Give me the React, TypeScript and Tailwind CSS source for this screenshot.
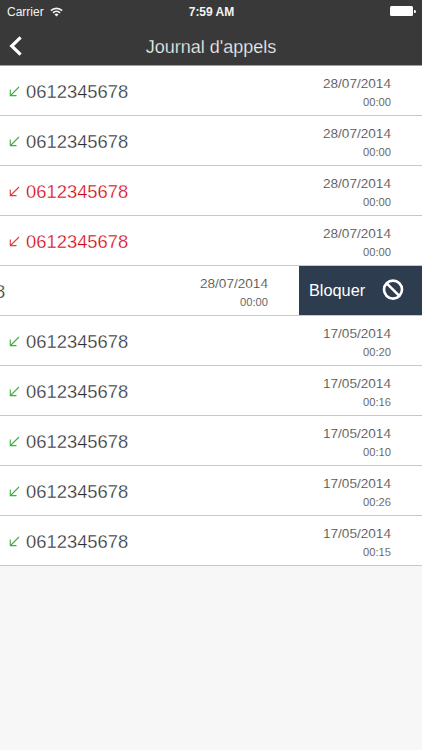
type Call = {
  number: string;
  date: string;
  time: string;
  missed?: boolean;
  swiped?: boolean;
};

const calls: Call[] = [
  { number: "0612345678", date: "28/07/2014", time: "00:00" },
  { number: "0612345678", date: "28/07/2014", time: "00:00" },
  { number: "0612345678", date: "28/07/2014", time: "00:00", missed: true },
  { number: "0612345678", date: "28/07/2014", time: "00:00", missed: true },
  { number: "0612345678", date: "28/07/2014", time: "00:00", swiped: true },
  { number: "0612345678", date: "17/05/2014", time: "00:20" },
  { number: "0612345678", date: "17/05/2014", time: "00:16" },
  { number: "0612345678", date: "17/05/2014", time: "00:10" },
  { number: "0612345678", date: "17/05/2014", time: "00:26" },
  { number: "0612345678", date: "17/05/2014", time: "00:15" },
];

function StatusBar() {
  return (
    <div className="grid h-[22px] grid-cols-3 items-center pr-[6px] pl-[7px] text-[12px] leading-none">
      <div className="flex items-center gap-[6px] pt-px">
        <span>Carrier</span>
        <svg width="13" height="10" viewBox="0 0 13 10" fill="none" stroke="currentColor" strokeWidth="1.7">
          <path d="M0.9 3.7a8 8 0 0 1 11.2 0" />
          <path d="M3 5.9a5 5 0 0 1 7 0" />
          <path d="M6.5 9.6 4.5 7.6a2.8 2.8 0 0 1 4 0z" fill="currentColor" stroke="none" />
        </svg>
      </div>
      <span className="pt-px text-center font-bold">7:59 AM</span>
      <div className="flex items-center justify-end gap-px">
        <span className="h-[10px] w-[23px] rounded-[1.5px] bg-white" />
        <span className="h-[3px] w-[1.5px] rounded-r-full bg-white" />
      </div>
    </div>
  );
}

function Header() {
  return (
    <header className="h-[66px] shrink-0 border-b border-[#a0a0a0] bg-[#393939] text-[#f4f4f4]">
      <StatusBar />
      <div className="grid h-[43px] grid-cols-[40px_1fr_40px] items-center pt-[6px]">
        <svg className="-mt-px ml-[9px]" width="13" height="20" viewBox="0 0 13 20" fill="none" stroke="#fff" strokeWidth="3.2">
          <path d="M11.6 1.3 2.7 10l8.9 8.7" />
        </svg>
        <h1 className="text-center text-[18px] leading-none [-webkit-text-stroke:0.25px_#393939]">Journal d'appels</h1>
      </div>
    </header>
  );
}

function CallRow({ call }: { call: Call }) {
  return (
    <li className="flex h-[49.98px] overflow-hidden border-b border-[#c8c8c8] bg-white">
      <div className={`flex w-[422px] shrink-0 items-center pr-[31px] pl-[9px] ${call.swiped ? "-ml-[123px]" : ""}`}>
        <svg
          className={`mt-[2px] ${call.missed ? "text-[#e0393b]" : "text-[#3cb03f]"}`}
          width="11"
          height="11"
          viewBox="0 0 11 11"
          fill="none"
          stroke="currentColor"
          strokeWidth="1.1"
        >
          <path d="M10 1 1.5 9.5M1.3 3.4v6.2h6.2" />
        </svg>
        <span
          className={`ml-[6px] pt-[3px] text-[18.4px] leading-none [-webkit-text-stroke:0.3px_#fff] ${
            call.missed ? "text-[#d4000a]" : "text-[#2c2c2c]"
          }`}
        >
          {call.number}
        </span>
        <div className="ml-auto flex flex-col items-end pt-[4px] text-[#3a3a3a] [-webkit-text-stroke:0.2px_#fff]">
          <span className="text-[13.6px] leading-[19px]">{call.date}</span>
          <span className="text-[11.2px] leading-[18px]">{call.time}</span>
        </div>
      </div>
      {call.swiped && (
        <button className="flex w-[124px] shrink-0 items-center bg-[#2d3c4f] pl-[10px] text-white">
          <span className="text-[16.3px] leading-none">Bloquer</span>
          <svg className="ml-[17px]" width="22" height="22" viewBox="0 0 22 22" fill="none" stroke="#fff" strokeWidth="2.6">
            <circle cx="11" cy="10.6" r="9" />
            <path d="m4.7 4.3 12.6 12.6" />
          </svg>
        </button>
      )}
    </li>
  );
}

export default function App() {
  return (
    <div className="flex h-[750px] w-[422px] flex-col overflow-hidden bg-[#f7f7f7] font-['Liberation_Sans',Arial,sans-serif] antialiased">
      <Header />
      <ul>
        {calls.map((call, i) => (
          <CallRow key={i} call={call} />
        ))}
      </ul>
    </div>
  );
}
